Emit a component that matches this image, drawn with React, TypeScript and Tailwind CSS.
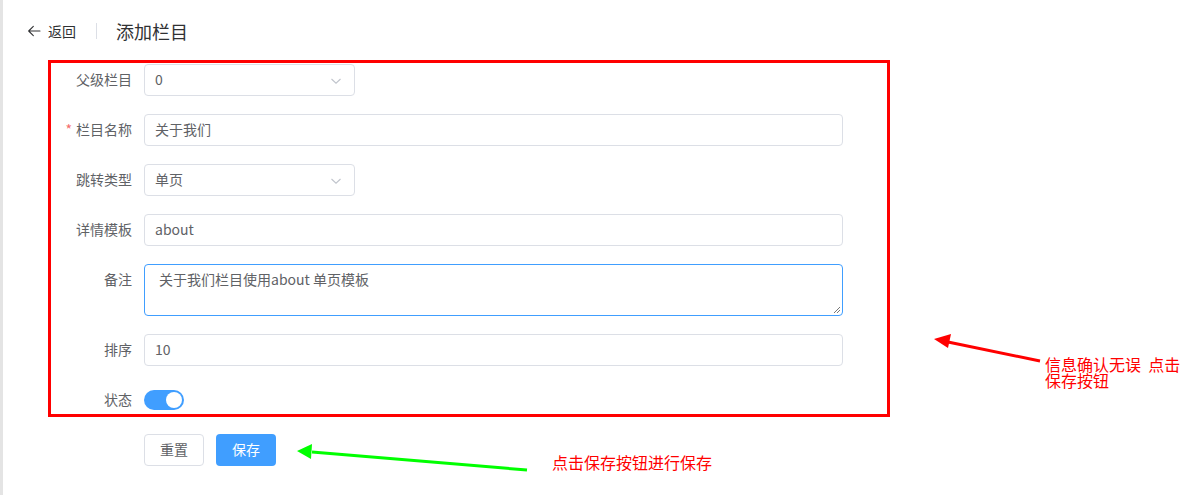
import React from "react";

const font = { fontFamily: '"Noto Sans CJK SC", "Noto Sans", sans-serif' };

function Label({ text, required }: { text: string; required?: boolean }) {
  return (
    <div className="w-[93px] shrink-0 pr-[12px] h-[32px] pb-[2px] flex items-center justify-end text-[14px] text-[#606266]">
      {required && <span className="text-[#f56c6c] mr-[4px]">*</span>}
      {text}
    </div>
  );
}

function Chevron() {
  return (
    <svg width="12" height="12" viewBox="0 0 12 12" className="absolute right-[12px] top-[10px]">
      <path d="M1.5 4 L6 8.2 L10.5 4" fill="none" stroke="#c0c4cc" strokeWidth="1.1" />
    </svg>
  );
}

function Input({ value, w, select }: { value: string; w: string; select?: boolean }) {
  return (
    <div className={`relative ${w} h-[32px] border border-[#dcdfe6] rounded-[4px] bg-white flex items-center pl-[10px] pb-[2px] text-[14px] text-[#606266]`}>
      {value}
      {select && <Chevron />}
    </div>
  );
}

export default function App() {
  return (
    <div className="relative w-[1190px] h-[495px] bg-white flex overflow-hidden" style={font}>
      <div className="w-[3px] h-full bg-[#e4e4e4] shrink-0" />
      <div className="flex-1 flex flex-col">
        {/* header */}
        <div className="h-[60px] flex items-start pt-[20px] pl-[23px]">
          <div className="flex items-center h-[22px]">
            <svg width="16" height="16" viewBox="0 0 24 24" className="mr-[6px]">
              <path d="M21 12H4M11 5l-7 7 7 7" fill="none" stroke="#303133" strokeWidth="1.6" strokeLinecap="round" strokeLinejoin="round" />
            </svg>
            <span className="text-[14px] text-[#303133]">返回</span>
            <div className="w-px h-[16px] bg-[#dcdfe6] ml-[20px] mr-[19px]" />
            <span className="text-[18px] text-[#303133]">添加栏目</span>
          </div>
        </div>
        {/* form */}
        <div className="ml-[45px] w-[842px] h-[357px] border-[3px] border-[#ff0000] pt-[1px] pr-[44px] flex flex-col gap-[18px]">
          <div className="flex">
            <Label text="父级栏目" />
            <Input value="0" w="w-[211px]" select />
          </div>
          <div className="flex">
            <Label text="栏目名称" required />
            <Input value="关于我们" w="flex-1" />
          </div>
          <div className="flex">
            <Label text="跳转类型" />
            <Input value="单页" w="w-[211px]" select />
          </div>
          <div className="flex">
            <Label text="详情模板" />
            <Input value="about" w="flex-1" />
          </div>
          <div className="flex">
            <Label text="备注" />
            <div className="relative flex-1 h-[52px] border border-[#409eff] rounded-[4px] bg-white pl-[14px] pt-[3px] text-[14px] leading-[22px] text-[#606266]">
              关于我们栏目使用about 单页模板
              <svg width="9" height="9" viewBox="0 0 9 9" className="absolute right-[1px] bottom-[1px]">
                <path d="M8 2 L2 8 M8 5 L5 8" stroke="#777" strokeWidth="1" />
              </svg>
            </div>
          </div>
          <div className="flex">
            <Label text="排序" />
            <Input value="10" w="flex-1" />
          </div>
          <div className="flex h-[30px]">
            <Label text="状态" />
            <div className="mt-[6px] w-[40px] h-[20px] rounded-full bg-[#409eff] relative">
              <div className="absolute right-[2px] top-[2px] w-[16px] h-[16px] rounded-full bg-white" />
            </div>
          </div>
        </div>
        {/* buttons */}
        <div className="flex gap-[12px] ml-[141px] mt-[17px]">
          <div className="w-[60px] h-[32px] border border-[#dcdfe6] rounded-[4px] flex items-center justify-center pb-[2px] text-[14px] text-[#606266] bg-white">
            重置
          </div>
          <div className="w-[60px] h-[32px] rounded-[4px] flex items-center justify-center pb-[2px] text-[14px] text-white bg-[#409eff]">
            保存
          </div>
        </div>
      </div>

      {/* annotations */}
      <svg className="absolute left-0 top-0 pointer-events-none" width="1190" height="495">
        <line x1="1040" y1="361" x2="948" y2="342" stroke="#ff0000" strokeWidth="3" />
        <polygon points="934,339 951,334 948,348" fill="#ff0000" />
        <line x1="527" y1="470" x2="312" y2="452" stroke="#00ff00" strokeWidth="3" />
        <polygon points="297,451 312,444 311,459" fill="#00ff00" />
      </svg>
      <div className="absolute left-[1045px] top-[356px] text-[16px] leading-[16px] text-[#ff0000] whitespace-pre">
        {"信息确认无误  点击\n保存按钮"}
      </div>
      <div className="absolute left-[552px] top-[454px] text-[16px] leading-[16px] text-[#ff0000] whitespace-pre">
        点击保存按钮进行保存
      </div>
    </div>
  );
}
